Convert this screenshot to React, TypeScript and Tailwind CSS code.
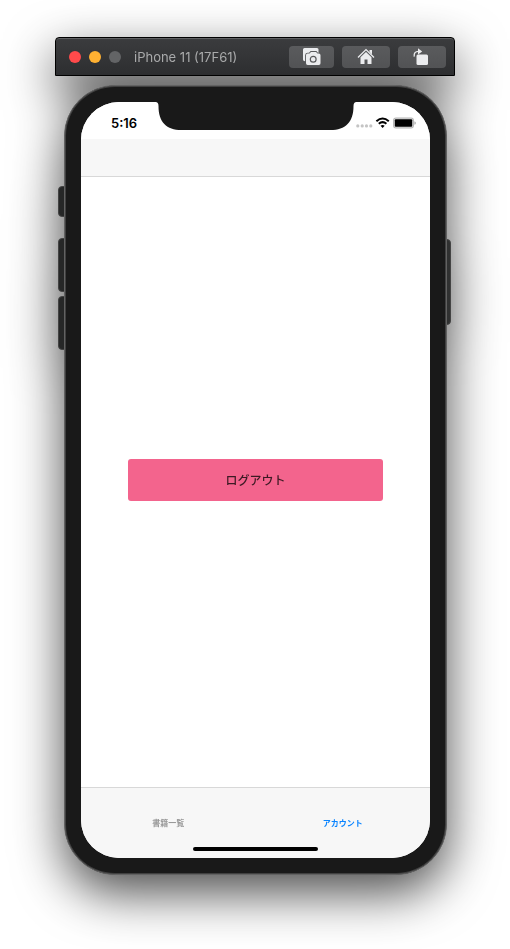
import type { ReactNode } from "react";

function ToolButton({ label, wide, children }: { label: string; wide?: boolean; children: ReactNode }) {
  return (
    <button
      type="button"
      aria-label={label}
      className={`flex h-[22px] items-center justify-center rounded bg-linear-to-b from-[#5a5b5d] to-[#525355] text-[#ebecee] ${wide ? "w-12" : "w-[45px]"}`}
    >
      {children}
    </button>
  );
}

function TitleBar() {
  return (
    <header className="flex h-[39px] items-center rounded-t border border-black bg-linear-to-b from-[#3b3c3e] to-[#2d2e30] pr-2 pl-[13px] shadow-[inset_0_1px_0_#5f6062]">
      <div className="flex gap-2">
        <button type="button" aria-label="Close" className="size-3 rounded-full bg-[#ff4a4b]" />
        <button type="button" aria-label="Minimize" className="size-3 rounded-full bg-[#ffb132]" />
        <button type="button" aria-label="Zoom" disabled className="size-3 rounded-full bg-[#636466]" />
      </div>
      <h1 className="ml-[13px] grow text-[13px] leading-4 text-[#a9aaab]">iPhone 11 (17F61)</h1>
      <div className="flex gap-2">
        <ToolButton label="Screenshot">
          <svg width="18" height="18" viewBox="0 0 18 18" fill="currentColor">
            <path d="M1.500 0H14q1.500 0 1.500 1.500V5H3.500v8.200H2Q0 13.200 0 11.500V1.500Q0 0 1.500 0Z" />
            <path
              d="M4.500 5.600h2L8 3.900h5l1.500 1.700h1.300q1.700 0 1.700 1.600v8q0 1.800-1.700 1.800H4.700Q3 17 3 15.200V7.200q0-1.600 1.500-1.600Z"
              stroke="#58595b"
              strokeWidth="1.800"
              paintOrder="stroke"
            />
            <circle cx="10.200" cy="11.200" r="2.900" fill="none" stroke="#58595b" strokeWidth="1.200" />
          </svg>
        </ToolButton>
        <ToolButton label="Home" wide>
          <svg width="18" height="18" viewBox="0 0 18 18" fill="currentColor">
            <path d="M1 9.500 9 1.600l8 7.900" fill="none" stroke="currentColor" strokeWidth="1.300" />
            <path d="M12.500 2H15v4.500l-2.500-2.400Z" />
            <path d="M3.500 9.300 9 3.900l5.500 5.400V16h-4v-4.500h-3V16h-4Z" />
          </svg>
        </ToolButton>
        <ToolButton label="Rotate" wide>
          <svg width="18" height="18" viewBox="0 0 18 18" fill="currentColor">
            <path d="M1.200 8.600Q.6 3.400 5.500 3.400" fill="none" stroke="currentColor" strokeWidth="1.300" />
            <path d="m5 .3 4.200 3.100L5 6.500Z" />
            <rect x="3.500" y="6.500" width="11.500" height="10.500" rx="1.500" />
          </svg>
        </ToolButton>
      </div>
    </header>
  );
}

function StatusBar() {
  return (
    <div className="flex h-[37px] items-center justify-between bg-white pt-1 pr-3.5 pl-[30px]">
      <time className="text-[13px] leading-4 font-semibold text-black">5:16</time>
      <svg width="60" height="12" viewBox="0 0 60 12" role="img" aria-label="Wi-Fi connected, battery full">
        <g fill="#c4c4c4">
          <circle cx="1.800" cy="8.900" r="1.600" />
          <circle cx="6.200" cy="8.900" r="1.600" />
          <circle cx="10.500" cy="8.900" r="1.600" />
          <circle cx="14.800" cy="8.900" r="1.600" />
        </g>
        <g fill="none" stroke="#000" strokeWidth="2">
          <path d="M20.400 4.200Q26.600-1.300 32.800 4.200" />
          <path d="M22.800 6.800q3.800-3.400 7.600 0" />
        </g>
        <path d="M24.500 8.800q2.100-1.700 4.200 0l-2.100 2.100Z" />
        <rect x="37.600" y="1" width="19.800" height="10" rx="2.400" fill="#ddd" stroke="#b5b5b5" strokeWidth="1.100" />
        <rect x="38.800" y="2.200" width="17.400" height="7.600" rx="1" />
        <path d="M58.300 4.200q1.700.4 1.700 1.800t-1.700 1.800Z" fill="#b5b5b5" />
      </svg>
    </div>
  );
}

function TabBar() {
  return (
    <footer className="h-[71px] border-t border-[#d8d8d8] bg-[#f7f7f7]">
      <nav className="grid h-[59px] grid-cols-2 pt-2.5 text-[8px] leading-3 font-bold">
        <a href="#books" className="flex items-center justify-center text-[#999999]">書籍一覧</a>
        <a href="#account" aria-current="page" className="flex items-center justify-center text-[#0a84ff]">アカウント</a>
      </nav>
      <div className="mx-auto h-1 w-[125px] rounded-full bg-black" />
    </footer>
  );
}

function Phone() {
  return (
    <div className="relative mt-[9px] mr-2 ml-[9px]">
      <div className="absolute top-[101px] -left-1.5 h-[31px] w-3 rounded-sm border border-[#444444] bg-[#262727]" />
      <div className="absolute top-[153px] -left-1.5 h-[54px] w-3 rounded-sm border border-[#444444] bg-[#262727]" />
      <div className="absolute top-[211px] -left-1.5 h-[54px] w-3 rounded-sm border border-[#444444] bg-[#262727]" />
      <div className="absolute top-[154px] -right-1 h-[86px] w-3 rounded-sm border border-[#444444] bg-[#303131]" />
      <div className="relative rounded-[51px] border border-[#626262] bg-[#191919] p-4 shadow-[inset_0_0_0_1px_#404040]">
        <div className="relative flex min-h-[756px] flex-col overflow-hidden rounded-[38px] bg-white">
          <StatusBar />
          <div className="h-[38px] border-b border-[#d8d8d8] bg-[#f7f7f7]" />
          <main className="flex grow items-center justify-center pb-1">
            <button
              type="button"
              className="h-[42px] w-[73%] rounded-[3px] bg-[#f3648d] pt-0.5 text-xs font-medium text-[#3d1a24]"
            >
              ログアウト
            </button>
          </main>
          <TabBar />
          <svg className="absolute top-0 left-1/2 -translate-x-1/2" width="201" height="28" viewBox="0 0 201 28" aria-hidden="true">
            <path d="M0 0Q3 0 3 4C3 20 11 28 26 28H175C190 28 198 20 198 4Q198 0 201 0Z" fill="#191919" />
          </svg>
        </div>
      </div>
    </div>
  );
}

export default function App() {
  return (
    <div className="flex min-h-screen justify-center overflow-hidden bg-white px-4 pt-[37px] pb-[74px] font-[Inter,'Noto_Sans_CJK_JP',sans-serif]">
      <div className="w-full max-w-[400px] drop-shadow-[0_18px_25px_rgba(0,0,0,0.7)]">
        <TitleBar />
        <Phone />
      </div>
    </div>
  );
}
